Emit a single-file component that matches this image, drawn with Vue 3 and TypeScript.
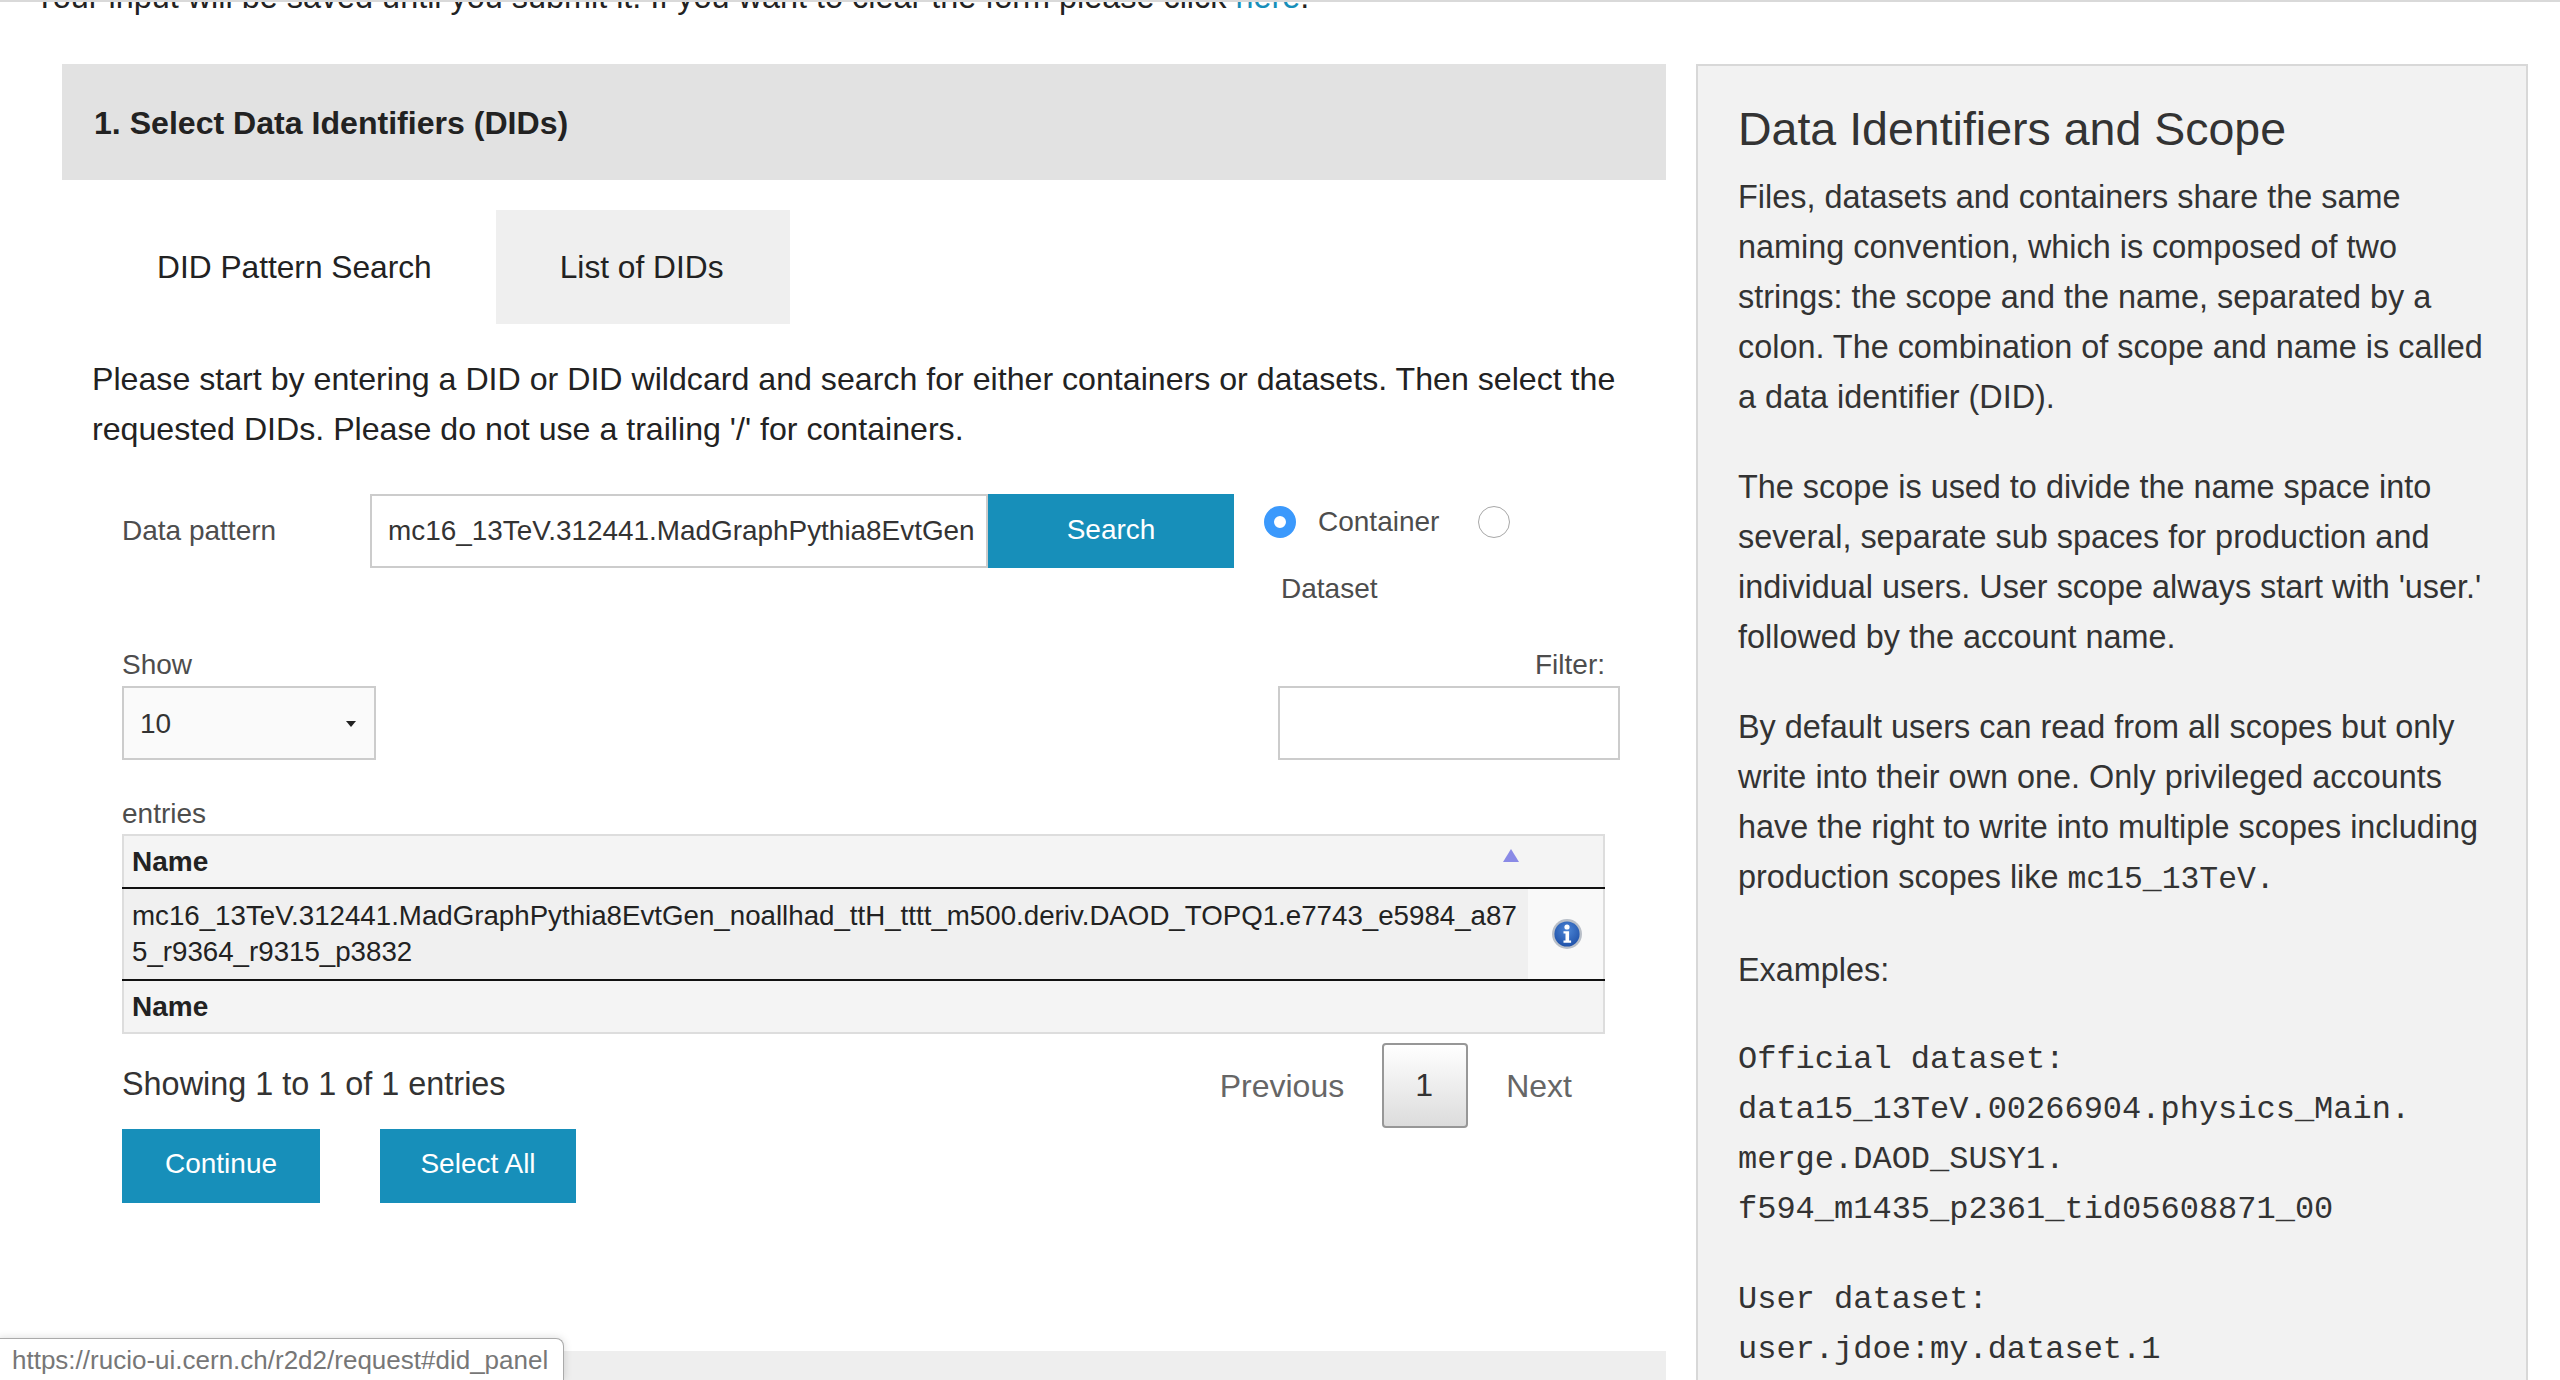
<template>
  <div class="page">
    <main class="left">
      <p class="intro">
        Your input will be saved until you submit it. If you want to clear the form please click
        <a href="#">here</a>.
      </p>

      <h2 class="step-title">1. Select Data Identifiers (DIDs)</h2>

      <ul class="tabs">
        <li v-for="tab in tabs" :key="tab.label" class="tab" :class="{ active: tab.active }">{{ tab.label }}</li>
      </ul>

      <p class="lead">
        Please start by entering a DID or DID wildcard and search for either containers or datasets. Then select the
        requested DIDs. Please do not use a trailing '/' for containers.
      </p>

      <form class="search-row" @submit.prevent>
        <label class="pattern-label" for="pattern">Data pattern</label>
        <input id="pattern" class="pattern-input" type="text" :value="pattern" />
        <button class="btn search-btn" type="submit">Search</button>
        <div class="types">
          <div class="types-line">
            <input class="radio" type="radio" name="kind" checked />
            <label class="type-label">Container</label>
            <input class="radio" type="radio" name="kind" />
          </div>
          <label class="type-label dataset">Dataset</label>
        </div>
      </form>

      <div class="table-wrap">
        <div class="controls">
          <div class="length">
            <label>Show</label>
            <div class="select-box">
              <select><option>10</option></select>
            </div>
            <label class="entries">entries</label>
          </div>
          <div class="filter">
            <label>Filter:</label>
            <input type="text" />
          </div>
        </div>

        <table class="grid">
          <colgroup>
            <col />
            <col class="info-col" />
          </colgroup>
          <thead>
            <tr>
              <th colspan="2">Name<span class="sort"></span></th>
            </tr>
          </thead>
          <tbody>
            <tr v-for="row in rows" :key="row">
              <td class="name-cell">{{ row }}</td>
              <td class="info-cell">
                <svg class="info" viewBox="0 0 32 32" width="32" height="32">
                  <defs>
                    <radialGradient id="infoBlue" cx="50%" cy="35%" r="70%">
                      <stop offset="0" stop-color="#4d86d6" />
                      <stop offset="1" stop-color="#1c4ea6" />
                    </radialGradient>
                  </defs>
                  <circle cx="16" cy="16" r="15" fill="#b9bfc8" />
                  <circle cx="16" cy="16" r="12.6" fill="url(#infoBlue)" />
                  <circle cx="16" cy="9" r="2.6" fill="#fff" />
                  <path d="M12.5 13.2h5.6v9.4h2v2.2h-7.6v-2.2h2v-7.2h-2z" fill="#fff" />
                </svg>
              </td>
            </tr>
          </tbody>
          <tfoot>
            <tr>
              <th colspan="2">Name</th>
            </tr>
          </tfoot>
        </table>

        <div class="table-bottom">
          <span class="count">Showing 1 to 1 of 1 entries</span>
          <div class="pager">
            <span class="pager-link">Previous</span>
            <span class="pager-current">1</span>
            <span class="pager-link">Next</span>
          </div>
        </div>

        <div class="actions">
          <button class="btn continue" type="button">Continue</button>
          <button class="btn select-all" type="button">Select All</button>
        </div>
      </div>

      <div class="next-step"></div>
    </main>

    <aside class="help">
      <h3>Data Identifiers and Scope</h3>
      <p>
        Files, datasets and containers share the same naming convention, which is composed of two strings: the scope
        and the name, separated by a colon. The combination of scope and name is called a data identifier (DID).
      </p>
      <p>
        The scope is used to divide the name space into several, separate sub spaces for production and individual
        users. User scope always start with 'user.' followed by the account name.
      </p>
      <p>
        By default users can read from all scopes but only write into their own one. Only privileged accounts have the
        right to write into multiple scopes including production scopes like <code class="inline">mc15_13TeV.</code>
      </p>
      <p>Examples:</p>
      <p v-for="ex in examples" :key="ex.title" class="example">
        <code>{{ ex.title }}</code>
        <code v-for="line in ex.lines" :key="line">{{ line }}</code>
      </p>
    </aside>

    <div class="status-bubble">https://rucio-ui.cern.ch/r2d2/request#did_panel</div>
  </div>
</template>

<script setup lang="ts">
interface Tab {
  label: string
  active: boolean
}

interface Example {
  title: string
  lines: string[]
}

const tabs: Tab[] = [
  { label: 'DID Pattern Search', active: false },
  { label: 'List of DIDs', active: true }
]

const pattern = 'mc16_13TeV.312441.MadGraphPythia8EvtGen'
const rows: string[] = ['mc16_13TeV.312441.MadGraphPythia8EvtGen_noallhad_ttH_tttt_m500.deriv.DAOD_TOPQ1.e7743_e5984_a875_r9364_r9315_p3832']

const examples: Example[] = [
  {
    title: 'Official dataset:',
    lines: ['data15_13TeV.00266904.physics_Main.', 'merge.DAOD_SUSY1.', 'f594_m1435_p2361_tid05608871_00']
  },
  {
    title: 'User dataset:',
    lines: ['user.jdoe:my.dataset.1']
  }
]
</script>

<style>
html,
body {
  margin: 0;
  background: #fff;
}
</style>

<style scoped>
.page {
  position: relative;
  display: flex;
  align-items: flex-start;
  gap: 30px;
  height: 1380px;
  padding: 0 32px 0 62px;
  box-sizing: border-box;
  overflow: hidden;
  font-family: "Liberation Sans", Arial, sans-serif;
  font-size: 32px;
  line-height: 50px;
  color: #222;
  border-top: 2px solid #d9d9d9;
}

.left {
  width: 1604px;
  flex: none;
}

.intro {
  margin: -30px 0 42px -28px;
  white-space: nowrap;
  font-size: 32.4px;
}

.intro a {
  color: #178fba;
  text-decoration: none;
}

.step-title {
  margin: 0;
  height: 116px;
  padding-left: 32px;
  background: #e2e2e2;
  font-size: 32.1px;
  line-height: 118px;
}

.tabs {
  display: flex;
  list-style: none;
  margin: 30px 0 0 31px;
  padding: 0;
  font-size: 31.7px;
}

.tab {
  padding: 32px 64px;
}

.tab.active {
  padding-right: 66px;
  background: #efefef;
}

.lead {
  margin: 30px 0 0 30px;
  width: 1545px;
  font-size: 32.15px;
}

.search-row {
  display: flex;
  align-items: flex-start;
  margin: 40px 0 0 60px;
  font-size: 28px;
  color: #4d4d4d;
}

.pattern-label {
  width: 248px;
  line-height: 74px;
}

.pattern-input {
  width: 618px;
  height: 74px;
  box-sizing: border-box;
  padding: 0 12px 0 16px;
  border: 2px solid #ccc;
  font: inherit;
  font-size: 27.9px;
  color: #333;
  outline: none;
}

.btn {
  padding: 0 0 3px;
  border: 0;
  background: #178fba;
  color: #fff;
  font-family: inherit;
  font-size: 28px;
}

.search-btn {
  width: 246px;
  height: 74px;
}

.types {
  margin-left: 30px;
  padding-top: 2px;
  line-height: 36px;
}

.types-line {
  display: flex;
  align-items: center;
  height: 52px;
}

.radio {
  appearance: none;
  width: 32px;
  height: 32px;
  margin: 0;
  border: 1px solid #a8a8a8;
  border-radius: 50%;
  background: #fff;
}

.radio:checked {
  border: 10px solid #3b99fc;
}

.type-label {
  margin: 0 39px 0 22px;
}

.dataset {
  display: block;
  margin: 23px 0 7px 17px;
}

.table-wrap {
  margin: 0 0 0 60px;
  width: 1483px;
  color: #4d4d4d;
  font-size: 28px;
}

.controls {
  display: flex;
  justify-content: space-between;
  align-items: flex-start;
  margin-top: 30px;
}

.controls label {
  display: block;
  line-height: 42px;
}

.select-box {
  position: relative;
  width: 254px;
  height: 74px;
  box-sizing: border-box;
  border: 2px solid #ccc;
  background: #fafafa;
}

.select-box select {
  appearance: none;
  width: 100%;
  height: 100%;
  padding: 2px 16px 0;
  border: 0;
  background: transparent;
  font: inherit;
  font-size: 28px;
  color: #333;
}

.select-box::after {
  content: "";
  position: absolute;
  top: 33px;
  right: 18px;
  border: 5px solid transparent;
  border-top: 6px solid #222;
  border-bottom: 0;
}

.controls label.entries {
  margin-top: 33px;
  line-height: 41px;
}

.filter {
  display: flex;
  flex-direction: column;
  align-items: flex-end;
}

.filter input {
  width: 342px;
  height: 74px;
  margin-right: -15px;
  box-sizing: border-box;
  border: 2px solid #ccc;
  outline: none;
}

.grid {
  width: 100%;
  border-collapse: collapse;
  border: 2px solid #ddd;
  color: #222;
  font-size: 27.7px;
  line-height: 36px;
  table-layout: fixed;
}

.info-col {
  width: 76px;
}

.grid th {
  position: relative;
  height: 51px;
  padding: 0 8px;
  background: #f4f4f4;
  text-align: left;
  font-size: 28px;
  font-weight: 700;
}

.grid thead th {
  border-bottom: 2px solid #111;
}

.grid tfoot th {
  border-top: 2px solid #111;
}

.name-cell {
  padding: 9px 8px;
  background: #f0f0f0;
  word-break: break-all;
}

.info-cell {
  padding: 0;
  background: #f9f9f9;
}

.info {
  display: block;
  margin-left: 23px;
}

.sort {
  position: absolute;
  top: 13px;
  right: 84px;
  border: 8px solid transparent;
  border-bottom: 13px solid #8a8ae6;
  border-top: 0;
}

.table-bottom {
  display: flex;
  justify-content: space-between;
  align-items: center;
  margin-top: 9px;
  font-size: 32px;
  color: #333;
}

.count {
  padding-bottom: 4px;
  font-size: 32.4px;
}

.pager {
  display: flex;
  align-items: center;
  gap: 38px;
  margin-right: 33px;
}

.pager-link {
  color: #666;
}

.pager-current {
  width: 86px;
  height: 85px;
  box-sizing: border-box;
  padding-right: 2px;
  border: 2px solid #979797;
  border-radius: 4px;
  background: linear-gradient(#fff, #dcdcdc);
  text-align: center;
  line-height: 80px;
  color: #333;
}

.actions {
  display: flex;
  gap: 60px;
  margin-top: 1px;
}

.actions .btn {
  height: 74px;
  padding-bottom: 5px;
}

.continue {
  width: 198px;
}

.select-all {
  width: 196px;
}

.next-step {
  height: 60px;
  margin-top: 148px;
  background: #eee;
}

.help {
  width: 832px;
  flex: none;
  box-sizing: border-box;
  margin-top: 62px;
  padding: 35px 40px 0 40px;
  min-height: 1400px;
  border: 2px solid #d8d8d8;
  background: #f2f2f2;
  color: #333;
  font-size: 32.4px;
}

.help h3 {
  margin: 0;
  font-size: 46.5px;
  font-weight: 400;
  line-height: 56px;
}

.help p {
  margin: 0 0 40px;
}

.help h3 + p {
  margin-top: 15px;
}

.help code {
  font-family: "Liberation Mono", monospace;
  font-size: 32px;
}

.help code.inline {
  font-size: 31.4px;
}

.example code {
  display: block;
}

.status-bubble {
  position: absolute;
  left: -2px;
  bottom: 0;
  height: 41px;
  padding: 0 15px 0 13px;
  border: 1px solid #aaa;
  border-bottom: 0;
  border-radius: 0 8px 0 0;
  background: #fff;
  box-shadow: 0 0 8px rgba(0, 0, 0, 0.15);
  font-size: 26px;
  line-height: 42px;
  color: #777;
}
</style>
